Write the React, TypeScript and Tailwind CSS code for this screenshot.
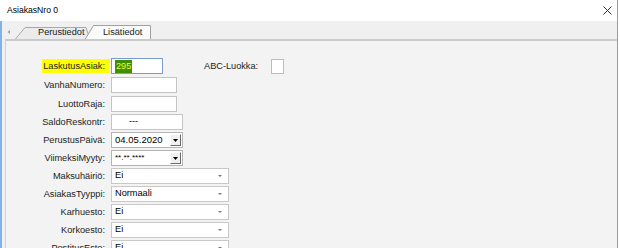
import React from "react";

const labelCls = "h-[16px] leading-[16px] pr-[5px] text-[9.2px] text-[#222] whitespace-nowrap";

function Row({ label, children, highlight, tall }: { label: string; children: React.ReactNode; highlight?: boolean; tall?: boolean }) {
  return (
    <div className={`flex items-start shrink-0 ${tall ? "h-[19px]" : "h-[18px]"}`}>
      <div className="w-[104px] flex justify-end shrink-0">
        {highlight ? (
          <span className="h-[14px] mt-[1px] leading-[14px] pl-[1px] pr-[5px] bg-[#ffff00] text-[9.2px] text-[#222] whitespace-nowrap">{label}</span>
        ) : (
          <span className={labelCls}>{label}</span>
        )}
      </div>
      {children}
    </div>
  );
}

function TextBox({ w, children, pl }: { w: string; children?: React.ReactNode; pl?: string }) {
  return (
    <div className={`${w} h-[16px] ml-[1px] border border-[#c4c4c4] bg-white flex items-center ${pl ?? "pl-[3px]"} text-[9px] text-black`}>
      {children}
    </div>
  );
}

function DateCombo({ value, small }: { value: string; small?: boolean }) {
  return (
    <div className="w-[72px] h-[16px] ml-[1px] border border-[#b4b4b4] bg-white flex items-center justify-between pl-[3px] pr-[1px]">
      <span className={`${small ? "text-[8px]" : "text-[9.5px]"} text-black leading-none`}>{value}</span>
      <div className="w-[11px] h-[12px] bg-[#f0f0f0] border-t border-l border-t-[#ffffff] border-l-[#ffffff] border-b border-r border-b-[#6b6b6b] border-r-[#6b6b6b] flex items-center justify-center">
        <svg width="5" height="3" viewBox="0 0 5 3"><path d="M0 0H5L2.5 3Z" fill="#000" /></svg>
      </div>
    </div>
  );
}

function Select({ value }: { value: string }) {
  return (
    <div className="w-[118px] h-[16px] ml-[1px] border border-[#c8c8c8] bg-white flex items-center justify-between pl-[3px] pr-[6px]">
      <span className="text-[9.2px] text-black leading-none">{value}</span>
      <svg width="4" height="2" viewBox="0 0 4 2"><path d="M0 0H4L2 2Z" fill="#7a7a7a" /></svg>
    </div>
  );
}

export default function App() {
  return (
    <div className="w-[620px] h-[248px] overflow-hidden bg-white flex font-['Liberation_Sans',Arial,sans-serif]">
      <div className="w-[617px] flex flex-col min-h-0">
        <div className="h-[21px] shrink-0 flex items-center justify-between pl-[7px] pr-[5px] bg-white">
          <span className="text-[8.6px] text-black">AsiakasNro 0</span>
          <svg width="9" height="9" viewBox="0 0 9 9">
            <path d="M0.5 0.5L8.5 8.5M8.5 0.5L0.5 8.5" stroke="#333" strokeWidth="1" />
          </svg>
        </div>
        <div className="flex-1 min-h-0 flex">
          <div className="w-[2px] bg-[#7fb2e5]" />
          <div className="flex-1 min-h-0 flex flex-col bg-[#f0f0f0]">
            <div className="h-[18px] shrink-0 relative">
              <svg className="absolute left-0 top-0" width="160" height="18" viewBox="0 0 160 18">
                <path d="M8 9L5.5 11L8 13Z" fill="#a0a0a0" />
                <path d="M13 18.5L23 6.5H84L88 18.5" fill="#ebebeb" stroke="#a8a8a8" strokeWidth="1" />
                <path d="M83 18.5L91.5 4.5H148.5V18.5" fill="#fbfbfb" stroke="#a0a0a0" strokeWidth="1" />
              </svg>
              <div className="relative flex items-center h-full pl-[36px] pt-[5px] text-[9.2px] text-[#1a1a1a]">
                <span className="w-[65px]">Perustiedot</span>
                <span>Lisätiedot</span>
              </div>
            </div>
            <div className="flex-1 min-h-0 overflow-hidden ml-[3px] border-t-2 border-l border-t-[#cacaca] border-l-[#d0d0d0] bg-[#f3f3f3] pt-[17px] flex flex-col">
              <Row label="LaskutusAsiak:" highlight tall>
                <div className="w-[52px] h-[16px] ml-[1px] border border-[#7a9bd0] bg-white flex items-center pl-[3px]">
                  <span className="bg-[#3f8f00] text-[#e4ff3c] text-[9.2px] leading-[13px] px-[1px]">295</span>
                </div>
                <span className="ml-[41px] h-[16px] leading-[16px] text-[9.2px] text-[#222]">ABC-Luokka:</span>
                <div className="ml-[13px] mt-[1px] w-[13px] h-[15px] border border-[#bcbcbc] bg-white" />
              </Row>
              <Row label="VanhaNumero:" tall>
                <TextBox w="w-[66px]" />
              </Row>
              <Row label="LuottoRaja:">
                <TextBox w="w-[66px]" />
              </Row>
              <Row label="SaldoReskontr:">
                <TextBox w="w-[72px]" pl="pl-[17px]">---</TextBox>
              </Row>
              <Row label="PerustusPäivä:">
                <DateCombo value="04.05.2020" />
              </Row>
              <Row label="ViimeksiMyyty:">
                <DateCombo value="**.**.****" small />
              </Row>
              <Row label="Maksuhäiriö:">
                <Select value="Ei" />
              </Row>
              <Row label="AsiakasTyyppi:">
                <Select value="Normaali" />
              </Row>
              <Row label="Karhuesto:">
                <Select value="Ei" />
              </Row>
              <Row label="Korkoesto:">
                <Select value="Ei" />
              </Row>
              <Row label="PostitusEsto:">
                <Select value="Ei" />
              </Row>
            </div>
          </div>
        </div>
      </div>
      <div className="w-[1px] bg-[#6fa8dc]" />
      <div className="w-[2px] bg-white" />
    </div>
  );
}
